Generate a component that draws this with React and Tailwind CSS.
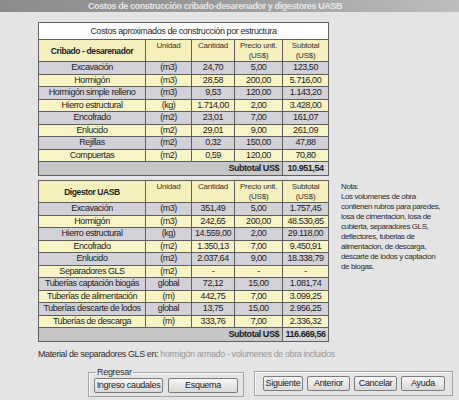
import React from 'react';

const cribado = [
  ['Excavación', '(m3)', '24,70', '5,00', '123,50'],
  ['Hormigón', '(m3)', '28,58', '200,00', '5.716,00'],
  ['Hormigón simple relleno', '(m3)', '9,53', '120,00', '1.143,20'],
  ['Hierro estructural', '(kg)', '1.714,00', '2,00', '3.428,00'],
  ['Encofrado', '(m2)', '23,01', '7,00', '161,07'],
  ['Enlucido', '(m2)', '29,01', '9,00', '261,09'],
  ['Rejillas', '(m2)', '0,32', '150,00', '47,88'],
  ['Compuertas', '(m2)', '0,59', '120,00', '70,80'],
];

const digestor = [
  ['Excavación', '(m3)', '351,49', '5,00', '1.757,45'],
  ['Hormigón', '(m3)', '242,65', '200,00', '48.530,85'],
  ['Hierro estructural', '(kg)', '14.559,00', '2,00', '29.118,00'],
  ['Encofrado', '(m2)', '1.350,13', '7,00', '9.450,91'],
  ['Enlucido', '(m2)', '2.037,64', '9,00', '18.338,79'],
  ['Separadores GLS', '(m2)', '-', '-', '-'],
  ['Tuberías captación biogás', 'global', '72,12', '15,00', '1.081,74'],
  ['Tuberías de alimentación', '(m)', '442,75', '7,00', '3.099,25'],
  ['Tuberías descarte de lodos', 'global', '13,75', '15,00', '2.956,25'],
  ['Tuberías de descarga', '(m)', '333,76', '7,00', '2.336,32'],
];

const nota = [
  'Nota:',
  'Los volumenes de obra',
  'contienen rubros para paredes,',
  'losa de cimentacion, losa de',
  'cubierta, separadores GLS,',
  'deflectores, tuberias de',
  'alimentacion, de descarga,',
  'descarte de lodos y captacion',
  'de biogas.',
];

function CostTable({ title, rows, subtotal, caption }) {
  const cell = 'border border-[#5e5e5e] text-center whitespace-nowrap overflow-hidden px-0 py-0';
  const head = `${cell} align-top pt-[1px] text-[8px] leading-[10px] tracking-[-0.25px] text-[#333]`;
  return (
    <table className="w-[290px] table-fixed border-collapse border border-[#4d4d4d] text-[#1c1c1c]">
      <colgroup>
        <col className="w-[107px]" />
        <col className="w-[46px]" />
        <col className="w-[43px]" />
        <col className="w-[48px]" />
        <col className="w-[46px]" />
      </colgroup>
      <tbody>
        {caption && (
          <tr className="h-[17px] bg-white">
            <td colSpan={5} className="border border-[#5e5e5e] text-center text-[9px] leading-none tracking-[-0.4px] text-[#2a2a2a]">
              {caption}
            </td>
          </tr>
        )}
        <tr className="h-[22px] bg-[#f5f0bd]">
          <td className={`${cell} align-middle pt-[2px] text-[8.5px] font-bold leading-none tracking-[-0.4px]`}>{title}</td>
          <td className={head}>Unidad</td>
          <td className={head}>Cantidad</td>
          <td className={head}>
            Precio unit.
            <br />
            (US$)
          </td>
          <td className={head}>
            Subtotal
            <br />
            (US$)
          </td>
        </tr>
        {rows.map((r, i) => (
          <tr
            key={r[0]}
            className={`h-[12.5px] text-[9px] leading-none tracking-[-0.45px] ${i % 2 === 0 ? 'bg-[#d3d1d8]' : 'bg-[#f8f4c6]'}`}
          >
            {r.map((v, j) => (
              <td key={j} className={cell}>
                {v}
              </td>
            ))}
          </tr>
        ))}
        <tr className="h-[14px] bg-[#c6c6c8] text-[9px] font-bold leading-none tracking-[-0.45px]">
          <td colSpan={4} className="border border-[#5e5e5e] pr-[3px] text-right">
            Subtotal US$
          </td>
          <td className="border border-[#5e5e5e] bg-[#d6d6d8] text-center">{subtotal}</td>
        </tr>
      </tbody>
    </table>
  );
}

function Btn({ children, w }) {
  return (
    <button
      className={`${w} h-[15px] whitespace-nowrap rounded-[2px] border border-[#7c7c7c] bg-gradient-to-b from-[#f7f7f7] to-[#d9d9d9] text-[9px] leading-none tracking-[-0.3px] text-[#202020]`}
    >
      {children}
    </button>
  );
}

export default function App() {
  return (
    <div className="w-[459px] h-[400px] overflow-hidden bg-[#e4e4e4] font-['Liberation_Sans',Arial,sans-serif]">
      <div className="h-[12px] flex items-center pl-[88px] bg-gradient-to-r from-[#8b8b8b] via-[#9c9c9c] to-[#bdbdbd] text-[9px] font-bold leading-none tracking-[-0.4px] text-[#e6e6e6]">
        Costos de construcción cribado-desarenador y digestores UASB
      </div>

      <div className="flex pl-[38px] pt-[10px]">
        <div className="flex flex-col w-[290px]">
          <CostTable
            caption="Costos aproximados de construcción por estructura"
            title="Cribado - desarenador"
            rows={cribado}
            subtotal="10.951,54"
          />
          <div className="h-[4px]" />
          <CostTable title="Digestor UASB" rows={digestor} subtotal="116.669,56" />
          <p className="mt-[7px] whitespace-nowrap text-[9px] leading-[11px] tracking-[-0.4px] text-[#2e2e2e]">
            Material de separadores GLS en: <span className="text-[#9a9a9a]">hormigón armado - volumenes de obra incluidos</span>
          </p>
        </div>

        <div className="ml-[13px] pt-[160px] text-[8px] leading-[10px] tracking-[-0.4px] text-[#2a2a2a]">
          {nota.map((l) => (
            <div key={l} className="whitespace-nowrap">
              {l}
            </div>
          ))}
        </div>
      </div>

      <div className="flex items-start pl-[88px] mt-[7px] gap-[10px]">
        <fieldset className="w-[155px] h-[30px] border border-[#a4a4a4] shadow-[inset_1px_1px_0_#fafafa] px-[5px] pt-0">
          <legend className="ml-[2px] px-[1px] text-[9px] leading-[10px] tracking-[-0.3px] text-[#2a2a2a]">Regresar</legend>
          <div className="flex gap-[5px] pt-[1px]">
            <Btn w="w-[69px]">Ingreso caudales</Btn>
            <Btn w="w-[70px]">Esquema</Btn>
          </div>
        </fieldset>
        <div className="mt-[4px] w-[199px] h-[25px] border border-[#a4a4a4] shadow-[inset_1px_1px_0_#fafafa] flex items-center gap-[4px] pl-[8px]">
          <Btn w="w-[40px]">Siguiente</Btn>
          <Btn w="w-[43px]">Anterior</Btn>
          <Btn w="w-[43px]">Cancelar</Btn>
          <Btn w="w-[44px]">Ayuda</Btn>
        </div>
      </div>
    </div>
  );
}
